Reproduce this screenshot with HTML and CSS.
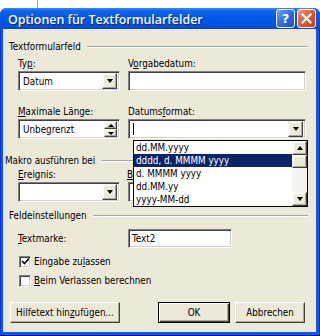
FILE: index.html
```html
<!DOCTYPE html>
<html lang="de">
<head>
<meta charset="utf-8">
<link rel="stylesheet" href="styles.css">
</head>
<body>
<div class="behind">
  <span class="vline"></span>
  <span class="frag f1">Textmarke</span>
  <span class="frag f2">Text1</span>
</div>
<div class="dialog">
  <div class="titlebar">
    <span class="title">Optionen für Textformularfelder</span>
    <span class="tb help">?</span>
    <span class="tb close"><svg width="11" height="11" viewBox="0 0 11 11"><path d="M1.5 1.5 L9.5 9.5 M9.5 1.5 L1.5 9.5" stroke="#fff" stroke-width="2.2" stroke-linecap="square"/></svg></span>
  </div>
  <div class="client">
    <div class="ghead g1"><span>Textformularfeld</span><i class="rule"></i></div>
    <div class="grid2 r1">
      <label>Ty<u>p</u>:</label>
      <label>V<u>o</u>rgabedatum:</label>
      <div class="combo sunken"><span class="val">Datum</span><span class="dbtn"><i class="arr"></i></span></div>
      <div class="field sunken"></div>
    </div>
    <div class="grid2 r2">
      <label><u>M</u>aximale Länge:</label>
      <label>Datums<u>f</u>ormat:</label>
      <div class="combo sunken"><span class="val">Unbegrenzt</span><span class="spin"><span class="sbtn"><i class="arr up"></i></span><span class="sbtn"><i class="arr"></i></span></span></div>
      <div class="combo sunken fmt"><span class="caret"></span><span class="dbtn"><i class="arr"></i></span>
        <div class="list">
          <div class="items">
            <div class="item">dd.MM.yyyy</div>
            <div class="item sel">dddd, d. MMMM yyyy</div>
            <div class="item">d. MMMM yyyy</div>
            <div class="item">dd.MM.yy</div>
            <div class="item">yyyy-MM-dd</div>
          </div>
          <div class="sbar">
            <span class="sb"><i class="arr up"></i></span>
            <span class="thumb"></span>
            <span class="track"></span>
            <span class="sb"><i class="arr"></i></span>
          </div>
        </div>
      </div>
    </div>
    <div class="ghead g2"><span>Makro ausführen bei</span><i class="rule"></i></div>
    <div class="grid2 r3">
      <label><u>E</u>reignis:</label>
      <label class="hidden-label"><u>B</u>eim Verlassen:</label>
      <div class="combo sunken"><span class="val"></span><span class="dbtn"><i class="arr"></i></span></div>
      <div class="combo sunken"><span class="val"></span><span class="dbtn"><i class="arr"></i></span></div>
    </div>
    <div class="ghead g3"><span>Feldeinstellungen</span><i class="rule"></i></div>
    <div class="tmrow">
      <label><u>T</u>extmarke:</label>
      <div class="field sunken tm">Text2</div>
    </div>
    <div class="check c1"><span class="box sunken"><svg width="9" height="9" viewBox="0 0 9 9"><path d="M1 4 L3.5 6.5 L8 1.5" fill="none" stroke="#000" stroke-width="1.6"/></svg></span><span>Eingabe zu<u>l</u>assen</span></div>
    <div class="check"><span class="box sunken"></span><span><u>B</u>eim Verlassen berechnen</span></div>
    <div class="buttons">
      <span class="btn help-btn">Hilfetext hin<u>z</u>ufügen...</span>
      <span class="btn ok">OK</span>
      <span class="btn">Abbrechen</span>
    </div>
  </div>
</div>
</body>
</html>
```
FILE: styles.css
```css
* { box-sizing: border-box; margin: 0; padding: 0; }
html, body { width: 320px; height: 336px; overflow: hidden; background: #fff; }
body {
  font-family: "DejaVu Sans Condensed", "DejaVu Sans", sans-serif;
  font-stretch: condensed;
  font-size: 9.8px;
  line-height: 13px;
  color: #000;
}
u { text-decoration: underline; text-underline-offset: 1px; }

.behind {
  height: 8px;
  overflow: hidden;
  display: flex;
  align-items: flex-end;
  background: #fff;
  padding-left: 37px;
}
.vline { width: 1px; height: 8px; background: #9aa7c0; align-self: stretch; }
.frag { color: #222; line-height: 13px; margin-bottom: 5px; font-size: 11px; }
.f1 { margin-left: 20px; }
.f2 { margin-left: 88px; }

.dialog {
  height: 328px;
  display: flex;
  flex-direction: column;
  background: #0a5ae3;
  border-radius: 7px 7px 0 0;
  box-shadow: inset 1px 0 #0831d9, inset -1px 0 #00138c, inset 0 -1px #00138c;
}
.titlebar {
  height: 21px;
  display: flex;
  align-items: center;
  padding: 0 4px 0 8px;
  border-radius: 7px 7px 0 0;
  background: linear-gradient(#3a8cff 0%, #1068f0 12%, #0058e6 40%, #0054e3 75%, #0048d0 100%);
  gap: 2px;
}
.title {
  flex: 1;
  color: #fff;
  font-family: "Open Sans", "DejaVu Sans", sans-serif;
  font-stretch: normal;
  font-weight: 600;
  font-size: 12.4px;
  line-height: 21px;
  text-shadow: 1px 1px #0b2a8a;
  padding-top: 1px;
}
.tb {
  width: 19px;
  height: 19px;
  border: 1px solid #fff;
  border-radius: 3px;
  display: flex;
  align-items: center;
  justify-content: center;
}
.help {
  background: linear-gradient(135deg, #6fa2ff 0%, #2c68e6 55%, #1f4fd0 100%);
  color: #fff;
  font-family: "DejaVu Sans", sans-serif;
  font-stretch: normal;
  font-weight: bold;
  font-size: 13px;
}
.close {
  background: linear-gradient(135deg, #f29478 0%, #e2582f 50%, #c83c1c 100%);
}

.client {
  flex: 1;
  margin: 0 4px 4px 3px;
  background: #ece9d8;
  padding-top: 11px;
}
.ghead {
  display: flex;
  align-items: center;
  height: 13px;
  padding: 0 8px 0 6px;
}
.ghead .rule {
  flex: 1;
  height: 2px;
  border-top: 1px solid #aca899;
  border-bottom: 1px solid #fff;
  margin-left: 6px;
}
.g2 { padding-left: 2px; margin-top: 15px; }
.g3 { margin-top: 7px; }

.grid2 {
  display: grid;
  grid-template-columns: 102px 178px;
  column-gap: 8px;
  row-gap: 1px;
  padding-left: 15px;
}
.r1 { margin-top: 4px; }
.r2 { margin-top: 14px; }
.r3 { margin-top: 1px; }
label { display: block; height: 13px; white-space: nowrap; }
.hidden-label { width: 8px; overflow: hidden; margin-left: -1px; }

.sunken {
  background: #fff;
  border: 1px solid;
  border-color: #808080 #fff #fff #808080;
  box-shadow: inset 1px 1px #404040, inset -1px -1px #d4d0c8;
}
.field { height: 20px; padding: 2px 3px; }
.combo {
  height: 20px;
  display: flex;
  align-items: center;
  padding: 2px;
  position: relative;
}
.combo .val { flex: 1; padding-left: 2px; }
.dbtn, .sbtn, .sb {
  background: #ece9d8;
  border: 1px solid;
  border-color: #f4f3ee #404040 #404040 #f4f3ee;
  box-shadow: inset -1px -1px #aca899, inset 1px 1px #fff;
  display: flex;
  align-items: center;
  justify-content: center;
}
.dbtn { width: 15px; height: 16px; margin-left: auto; }
.arr {
  width: 0; height: 0;
  border-left: 3.5px solid transparent;
  border-right: 3.5px solid transparent;
  border-top: 4px solid #000;
}
.arr.up { border-top: 0; border-bottom: 4px solid #000; }
.spin { display: flex; flex-direction: column; width: 13px; height: 16px; }
.sbtn { height: 8px; }
.sbtn .arr { border-left-width: 3px; border-right-width: 3px; border-top-width: 3px; }
.sbtn .arr.up { border-top-width: 0; border-bottom-width: 3px; }
.caret { width: 1px; height: 12px; background: #000; margin-left: 2px; }

.list {
  position: absolute;
  top: 20px;
  left: 4px;
  width: 175px;
  height: 67px;
  background: #fff;
  border: 1px solid #000;
  display: flex;
  z-index: 2;
}
.items { flex: 1; }
.item { height: 13px; line-height: 13px; padding-left: 2px; white-space: nowrap; }
.item.sel { background: #0a246a; color: #fff; }
.sbar { width: 15px; display: flex; flex-direction: column; }
.sb { height: 14px; }
.thumb {
  height: 13px;
  background: #ece9d8;
  border: 1px solid;
  border-color: #f4f3ee #404040 #404040 #f4f3ee;
  box-shadow: inset -1px -1px #aca899, inset 1px 1px #fff;
}
.track { flex: 1; background: #f4f3ee; }

.tmrow {
  display: flex;
  align-items: center;
  padding-left: 15px;
  margin-top: 7px;
}
.tmrow label { width: 110px; }
.field.tm { width: 104px; height: 19px; line-height: 13px; padding: 2px 3px; }

.check {
  display: flex;
  align-items: center;
  height: 19px;
  padding-left: 16px;
  gap: 3px;
}
.c1 { margin-top: 4px; }
.box {
  width: 12px;
  height: 12px;
  display: flex;
  align-items: center;
  justify-content: center;
}

.buttons {
  display: flex;
  margin-top: 12px;
  padding: 0 11px 0 7px;
  gap: 5px;
}
.btn {
  height: 21px;
  display: flex;
  align-items: center;
  justify-content: center;
  background: #ece9d8;
  border: 1px solid;
  border-color: #fff #404040 #404040 #fff;
  box-shadow: inset -1px -1px #aca899;
}
.help-btn { width: 110px; }
.ok { width: 72px; margin-left: auto; border: 1px solid #000; box-shadow: inset 1px 1px #fff, inset -1px -1px #404040, inset -2px -2px #aca899; }
.btn:last-child { width: 70px; }
```
